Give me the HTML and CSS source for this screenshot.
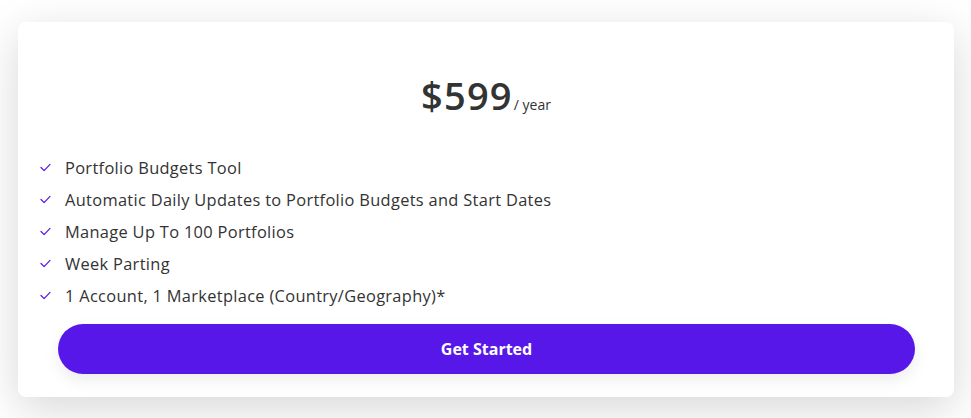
FILE: index.html
```html
<!DOCTYPE html>
<html>
<head>
<meta charset="utf-8">
<link rel="stylesheet" href="styles.css">
</head>
<body>
<div class="page">
  <div class="card">
    <div class="price"><span class="amount">$599</span><span class="period">/ year</span></div>
    <ul class="features">
      <li><svg class="check" viewBox="0 0 12 10" width="11" height="9"><path d="M1 5 L4.5 8.5 L11 1.5" fill="none" stroke="#5a1ce6" stroke-width="1.4" stroke-linecap="round" stroke-linejoin="round"/></svg><span>Portfolio Budgets Tool</span></li>
      <li><svg class="check" viewBox="0 0 12 10" width="11" height="9"><path d="M1 5 L4.5 8.5 L11 1.5" fill="none" stroke="#5a1ce6" stroke-width="1.4" stroke-linecap="round" stroke-linejoin="round"/></svg><span>Automatic Daily Updates to Portfolio Budgets and Start Dates</span></li>
      <li><svg class="check" viewBox="0 0 12 10" width="11" height="9"><path d="M1 5 L4.5 8.5 L11 1.5" fill="none" stroke="#5a1ce6" stroke-width="1.4" stroke-linecap="round" stroke-linejoin="round"/></svg><span>Manage Up To 100 Portfolios</span></li>
      <li><svg class="check" viewBox="0 0 12 10" width="11" height="9"><path d="M1 5 L4.5 8.5 L11 1.5" fill="none" stroke="#5a1ce6" stroke-width="1.4" stroke-linecap="round" stroke-linejoin="round"/></svg><span>Week Parting</span></li>
      <li><svg class="check" viewBox="0 0 12 10" width="11" height="9"><path d="M1 5 L4.5 8.5 L11 1.5" fill="none" stroke="#5a1ce6" stroke-width="1.4" stroke-linecap="round" stroke-linejoin="round"/></svg><span>1 Account, 1 Marketplace (Country/Geography)*</span></li>
    </ul>
    <div class="cta"><button class="btn">Get Started</button></div>
  </div>
</div>
</body>
</html>
```
FILE: styles.css
```css
html, body {
  margin: 0;
  padding: 0;
  background: #ffffff;
}
body {
  width: 971px;
  height: 418px;
  overflow: hidden;
  font-family: "Open Sans", "DejaVu Sans", sans-serif;
  color: #333333;
}
.page {
  padding: 22px 17px 0 18px;
}
.card {
  background: #ffffff;
  border-radius: 8px;
  box-shadow: 0 12px 45px rgba(0, 0, 0, 0.16);
  height: 375px;
  box-sizing: border-box;
  padding-top: 51px;
}
.price {
  display: flex;
  justify-content: center;
  align-items: baseline;
  padding-left: 0;
}
.amount {
  font-size: 38px;
  font-weight: 600;
  letter-spacing: 1.2px;
  line-height: 44px;
}
.period {
  font-size: 14px;
  margin-left: 1px;
}
.features {
  list-style: none;
  margin: 34px 0 0 0;
  padding: 0 0 0 22px;
}
.features li {
  display: flex;
  align-items: center;
  height: 32px;
  font-size: 16.4px;
  letter-spacing: 0.32px;
}
.check {
  margin-right: 14px;
  flex: none;
}
.cta {
  padding: 0 39px 0 40px;
  margin-top: 13px;
}
.btn {
  display: block;
  width: 100%;
  height: 50px;
  border: none;
  border-radius: 25px;
  background: #5717e8;
  color: #ffffff;
  font-family: "Open Sans", "DejaVu Sans", sans-serif;
  font-weight: 700;
  font-size: 16px;
  box-shadow: 0 6px 16px rgba(0, 0, 0, 0.08);
}
```
